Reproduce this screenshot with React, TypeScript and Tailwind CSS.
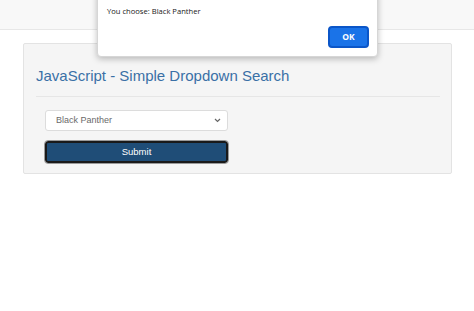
import React from "react";

export default function App() {
  return (
    <div className="relative w-[474px] h-[311px] bg-white overflow-hidden" style={{ fontFamily: '"Liberation Sans", Arial, sans-serif' }}>
      <div className="h-[30px] bg-[#f8f8f8] border-b border-[#e7e7e7]" />
      <div className="pt-[13px] px-[23px]">
        <div className="w-[429px] h-[131px] bg-[#f5f5f5] border border-[#e3e3e3] rounded-[2px] px-[12px] pt-[22px]">
          <h3 className="text-[15px] leading-[20px] text-[#3a70a6]">JavaScript - Simple Dropdown Search</h3>
          <div className="mt-[10px] h-px bg-[#e6e6e6] w-[404px]" />
          <div className="pl-[9px] pt-[13px] flex flex-col gap-[10px]">
            <div className="w-[183px] h-[21px] bg-white border border-[#dcdcdc] rounded-[3px] flex items-center justify-between pl-[10px] pr-[6px]">
              <span className="text-[9px] text-[#6a6a6a]">Black Panther</span>
              <svg width="7" height="5" viewBox="0 0 7 5" fill="none">
                <path d="M1 1l2.5 2.5L6 1" stroke="#666" strokeWidth="1.2" />
              </svg>
            </div>
            <button className="w-[183px] h-[22px] bg-[#1f4d77] border-2 border-[#1a1a1a] rounded-[3px] outline outline-1 outline-[#9a9a9a] text-white text-[9.5px] flex items-center justify-center">
              Submit
            </button>
          </div>
        </div>
      </div>
      <div className="absolute left-[97px] top-[-10px] w-[281px] h-[67px] bg-white border border-[#d6d6d6] rounded-[4px] shadow-[0_2px_6px_rgba(0,0,0,0.25)]">
        <div className="pl-[9px] pt-[15px] text-[7.6px] text-[#202020]" style={{ fontFamily: '"Open Sans", "Noto Sans", sans-serif' }}>
          You choose: Black Panther
        </div>
        <button className="absolute left-[230px] top-[35px] w-[41px] h-[22px] bg-[#1a73e8] border-2 border-[#0b56c8] rounded-[4px] text-white text-[8.5px] font-bold flex items-center justify-center" style={{ fontFamily: '"Open Sans", "Noto Sans", sans-serif' }}>
          OK
        </button>
      </div>
    </div>
  );
}
